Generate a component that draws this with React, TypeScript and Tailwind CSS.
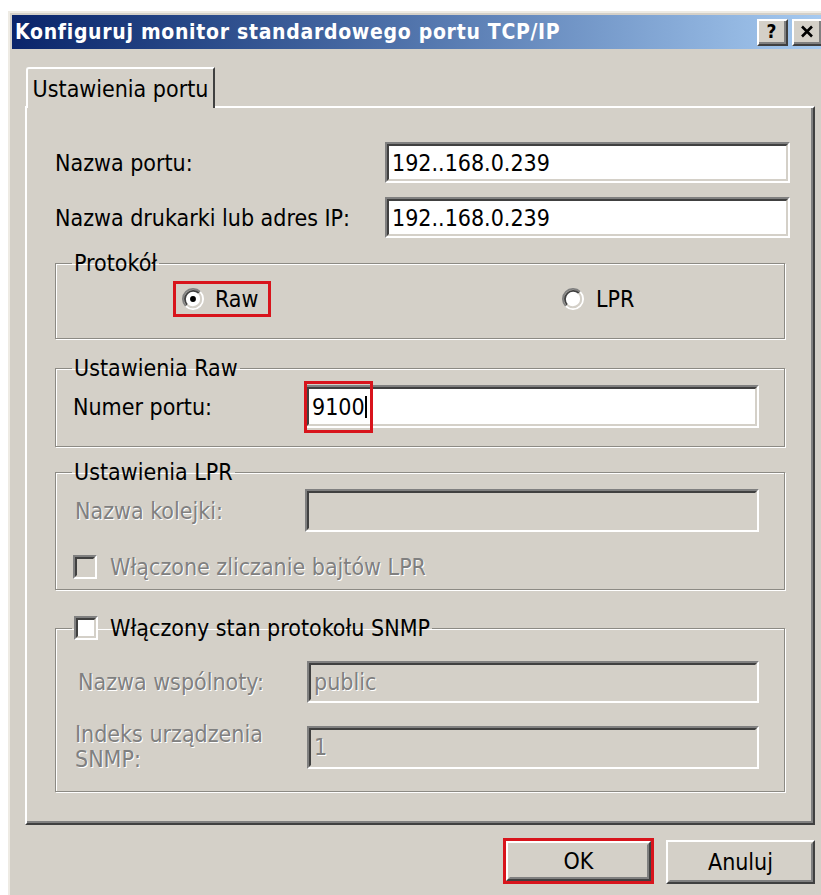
import React from "react";

const face = "font-['DejaVu_Sans_Condensed','Liberation_Sans',sans-serif]";
const muted = "text-[#808080] [text-shadow:1px_1px_0_#ffffff]";

type FieldProps = {
    value?: string;
    disabled?: boolean;
    className?: string;
    children?: React.ReactNode;
};

// classic sunken edit box
const Field = ({ value, disabled, className = "", children }: FieldProps) => (
    <div className={`relative border-2 border-t-[#808080] border-l-[#808080] border-b-white border-r-white ${className}`}>
        <div
            className={`h-full flex items-center px-[3px] border-2 border-t-[#404040] border-l-[#404040] border-b-[#d4d0c8] border-r-[#d4d0c8] ${disabled ? `bg-[#d4d0c8] ${muted}` : "bg-white text-black"}`}
        >
            {value}
            {children}
        </div>
    </div>
);

const Radio = ({ checked }: { checked?: boolean }) => (
    <svg width="22" height="22" viewBox="0 0 12 12" className="shrink-0">
        <circle cx="6" cy="6" r="4.5" fill="#ffffff" />
        <path d="M2.11 9.89 A5.5 5.5 0 0 1 9.89 2.11" fill="none" stroke="#808080" strokeWidth="1" />
        <path d="M9.89 2.11 A5.5 5.5 0 0 1 2.11 9.89" fill="none" stroke="#ffffff" strokeWidth="1" />
        <path d="M2.82 9.18 A4.5 4.5 0 0 1 9.18 2.82" fill="none" stroke="#404040" strokeWidth="1" />
        <path d="M9.18 2.82 A4.5 4.5 0 0 1 2.82 9.18" fill="none" stroke="#d4d0c8" strokeWidth="1" />
        {checked && <circle cx="6" cy="6" r="1.6" fill="#000000" />}
    </svg>
);

const Check = ({ disabled }: { disabled?: boolean }) => (
    <div className="w-[24px] h-[24px] shrink-0 border-2 border-t-[#808080] border-l-[#808080] border-b-white border-r-white">
        <div
            className={`h-full border-2 border-t-[#404040] border-l-[#404040] border-b-[#d4d0c8] border-r-[#d4d0c8] ${disabled ? "bg-[#d4d0c8]" : "bg-white"}`}
        />
    </div>
);

const Button = ({ label, className = "" }: { label: string; className?: string }) => (
    <div className={`border-2 border-t-white border-l-white border-b-[#404040] border-r-[#404040] ${className}`}>
        <div className="h-full flex items-center justify-center border-2 border-t-[#d4d0c8] border-l-[#d4d0c8] border-b-[#808080] border-r-[#808080]">
            {label}
        </div>
    </div>
);

const CaptionButton = ({ children }: { children: React.ReactNode }) => (
    <div className="w-[31px] h-[27px] shrink-0 bg-[#d4d0c8] border-2 border-t-white border-l-white border-b-[#404040] border-r-[#404040]">
        <div className="h-full flex items-center justify-center border-b-2 border-r-2 border-[#808080]">
            {children}
        </div>
    </div>
);

const groupBox = "w-[730px] border border-[#8c8a84] shadow-[inset_1px_1px_0_#ffffff,1px_1px_0_#ffffff] px-0";

export default function App() {
    return (
        <div className={`w-[821px] h-[895px] bg-white pt-[11px] pl-[8px] overflow-hidden text-[23px] leading-[26px] text-black ${face}`}>
            <div className="h-full flex flex-col bg-[#d4d0c8] border-t-2 border-l-2 border-[#eeebe4] pt-[2px] pl-[2px]">
                {/* caption */}
                <div className="h-[34px] flex items-center bg-linear-to-r from-[#0a246a] to-[#a6caf0] pl-[3px] pr-0">
                    <span className="flex-1 text-white font-bold text-[21px] tracking-[0.7px] whitespace-nowrap">
                        Konfiguruj monitor standardowego portu TCP/IP
                    </span>
                    <div className="flex gap-[4px] pr-0 -mr-[2px]">
                        <CaptionButton>
                            <span className="font-bold text-[19px] leading-none text-black">?</span>
                        </CaptionButton>
                        <CaptionButton>
                            <svg width="14" height="13" viewBox="0 0 14 13">
                                <path d="M2 1.5 L12 11.5 M12 1.5 L2 11.5" stroke="#000" strokeWidth="2.6" />
                            </svg>
                        </CaptionButton>
                    </div>
                </div>

                {/* tab strip */}
                <div className="mt-[18px] ml-[14px] flex">
                    <div className="relative z-10 -mb-[2px] w-[189px] h-[41px] bg-[#d4d0c8] border-t-2 border-l-2 border-white border-r-2 border-r-[#404040] rounded-tl-[3px] flex items-center justify-center whitespace-nowrap">
                        Ustawienia portu
                    </div>
                </div>

                {/* tab page */}
                <div className="ml-[13px] w-[790px] h-[719px] border-t-2 border-l-2 border-white border-b-2 border-r-2 border-b-[#404040] border-r-[#404040]">
                    <div className="h-full border-b-2 border-r-2 border-[#808080] pl-[28px] pr-[21px] pt-[34px] flex flex-col">
                        <div className="flex items-center">
                            <span className="flex-1">Nazwa portu:</span>
                            <Field value="192..168.0.239" className="w-[405px] h-[41px]" />
                        </div>
                        <div className="flex items-center mt-[14px]">
                            <span className="flex-1 whitespace-nowrap">Nazwa drukarki lub adres IP:</span>
                            <Field value="192..168.0.239" className="w-[405px] h-[41px]" />
                        </div>

                        <fieldset className={`mt-[12px] h-[89px] ${groupBox}`}>
                            <legend className="ml-[16px] px-[2px]">Protokół</legend>
                            <div className="flex items-center pl-[117px] pt-[5px]">
                                <div className="w-[98px] h-[36px] border-[3px] border-[#d8141c] flex items-center gap-[11px] pl-[6px]">
                                    <Radio checked />
                                    <span>Raw</span>
                                </div>
                                <div className="ml-[291px] flex items-center gap-[12px]">
                                    <Radio />
                                    <span>LPR</span>
                                </div>
                            </div>
                        </fieldset>

                        <fieldset className={`mt-[16px] h-[92px] ${groupBox}`}>
                            <legend className="ml-[16px] px-[2px]">Ustawienia Raw</legend>
                            <div className="flex items-center pl-[17px] pt-[4px]">
                                <span className="flex-1">Numer portu:</span>
                                <Field className="w-[454px] h-[43px] mr-[25px]">
                                    <span>9100</span>
                                    <span className="w-[2px] h-[22px] bg-black" />
                                    <div className="absolute -left-[3px] -top-[6px] w-[69px] h-[52px] border-[3px] border-[#d8141c]" />
                                </Field>
                            </div>
                        </fieldset>

                        <fieldset className={`mt-[12px] h-[131px] ${groupBox}`}>
                            <legend className="ml-[16px] px-[2px]">Ustawienia LPR</legend>
                            <div className="flex items-center pl-[19px] pt-[4px]">
                                <span className={`flex-1 ${muted}`}>Nazwa kolejki:</span>
                                <Field disabled className="w-[454px] h-[43px] mr-[25px]" />
                            </div>
                            <div className="flex items-center gap-[13px] pl-[17px] mt-[22px]">
                                <Check disabled />
                                <span className={muted}>Włączone zliczanie bajtów LPR</span>
                            </div>
                        </fieldset>

                        <fieldset className={`mt-[25px] h-[177px] ${groupBox}`}>
                            <legend className="ml-[16px] px-[2px] flex items-center gap-[12px]">
                                <Check />
                                <span>Włączony stan protokołu SNMP</span>
                            </legend>
                            <div className="flex items-center pl-[22px] pt-[20px]">
                                <span className={`flex-1 ${muted}`}>Nazwa wspólnoty:</span>
                                <Field disabled value="public" className="w-[452px] h-[42px] mr-[25px]" />
                            </div>
                            <div className="flex items-center pl-[19px] mt-[19px]">
                                <span className={`flex-1 leading-[25px] ${muted}`}>
                                    Indeks urządzenia
                                    <br />
                                    SNMP:
                                </span>
                                <Field disabled value="1" className="w-[452px] h-[43px] mr-[25px]" />
                            </div>
                        </fieldset>
                    </div>
                </div>

                {/* dialog buttons */}
                <div className="mt-[13px] flex justify-end pr-[6px] gap-[12px]">
                    <div className="w-[151px] h-[46px] border-[3px] border-[#d8141c]">
                        <Button label="OK" className="h-full" />
                    </div>
                    <Button label="Anuluj" className="w-[149px] h-[44px] mt-[2px]" />
                </div>
            </div>
        </div>
    );
}
